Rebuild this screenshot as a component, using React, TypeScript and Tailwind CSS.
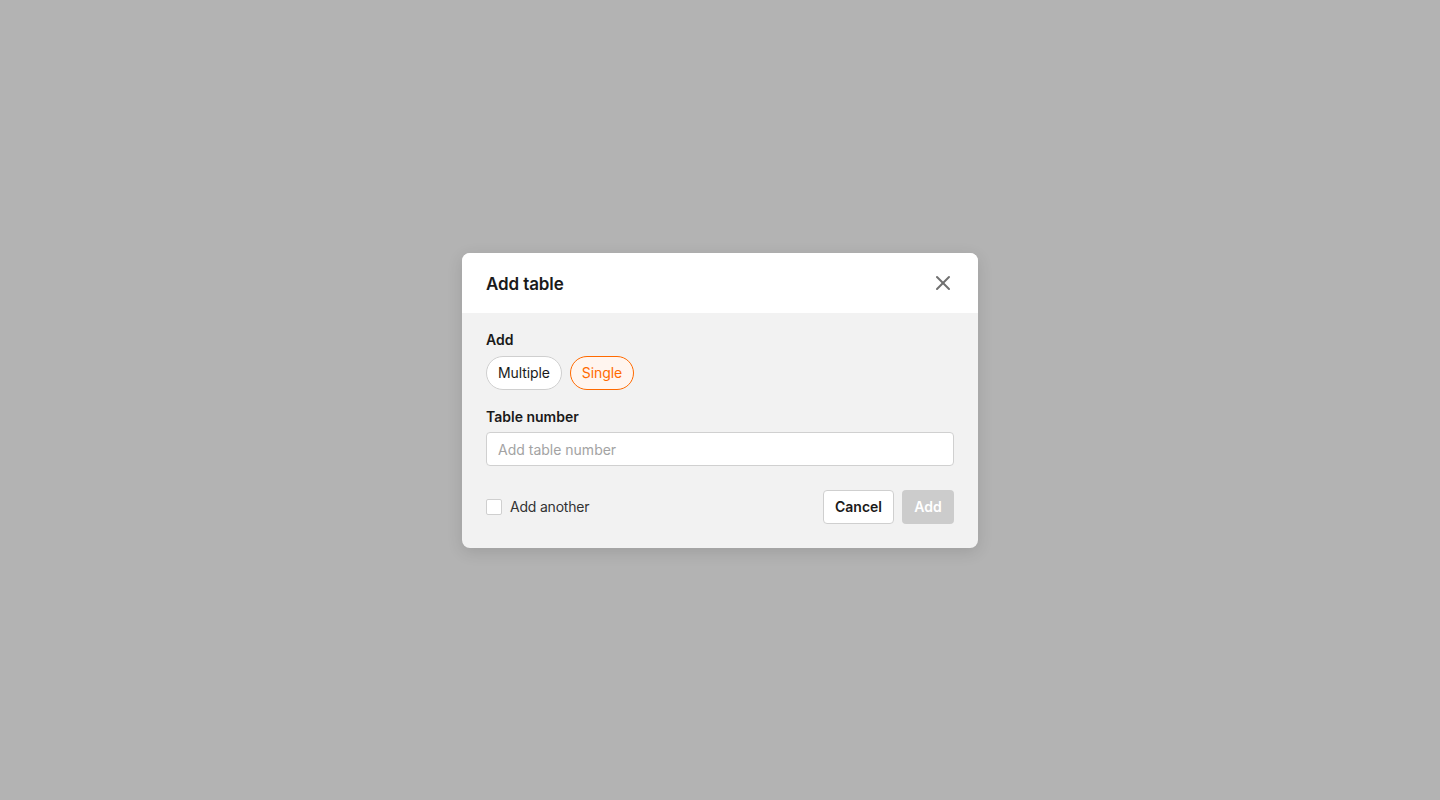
import { X } from "lucide-react"

export default function App() {
  return (
    <div className="flex min-h-screen w-full items-center justify-center bg-[#b3b3b3] font-['Inter',sans-serif] text-[#1a1a1a]">
      <div className="mt-[1px] w-[516px] overflow-hidden rounded-lg bg-[#f2f2f2] shadow-[0_4px_16px_rgba(0,0,0,0.12)]">
        <div className="flex h-[60px] items-center justify-between bg-white pl-6 pr-[23px]">
          <h2 className="pt-[3px] text-[17px] font-semibold tracking-[-0.1px]">Add table</h2>
          <button className="text-[#707070]" aria-label="Close">
            <X size={24} strokeWidth={2} />
          </button>
        </div>
        <div className="px-6 pt-[17px] pb-6">
          <p className="text-sm font-semibold leading-5">Add</p>
          <div className="mt-[6px] flex gap-2">
            <button className="h-[34px] rounded-full border border-[#cfcfcf] bg-white px-[11px] text-sm tracking-[-0.1px] text-[#1a1a1a]">
              Multiple
            </button>
            <button className="h-[34px] rounded-full border border-[#ff6a00] bg-[#fff5ef] px-[11px] text-sm tracking-[-0.1px] text-[#ff6a00]">
              Single
            </button>
          </div>
          <label className="mt-[17px] block text-sm font-semibold leading-5">Table number</label>
          <input
            className="mt-[5px] h-[34px] w-full rounded border border-[#d0d0d0] bg-white px-[11px] text-sm placeholder:text-[#a3a3a3] outline-none"
            placeholder="Add table number"
          />
          <div className="mt-6 flex items-center justify-between">
            <label className="flex items-center gap-2 text-sm tracking-[-0.2px] text-[#333]">
              <span className="h-4 w-4 rounded-[2px] border border-[#cfcfcf] bg-white" />
              Add another
            </label>
            <div className="flex gap-2">
              <button className="h-[34px] w-[71px] rounded border border-[#cfcfcf] bg-white text-sm font-semibold text-[#1a1a1a]">
                Cancel
              </button>
              <button className="h-[34px] w-[52px] rounded bg-[#cccccc] text-sm font-semibold text-white">
                Add
              </button>
            </div>
          </div>
        </div>
      </div>
    </div>
  )
}
